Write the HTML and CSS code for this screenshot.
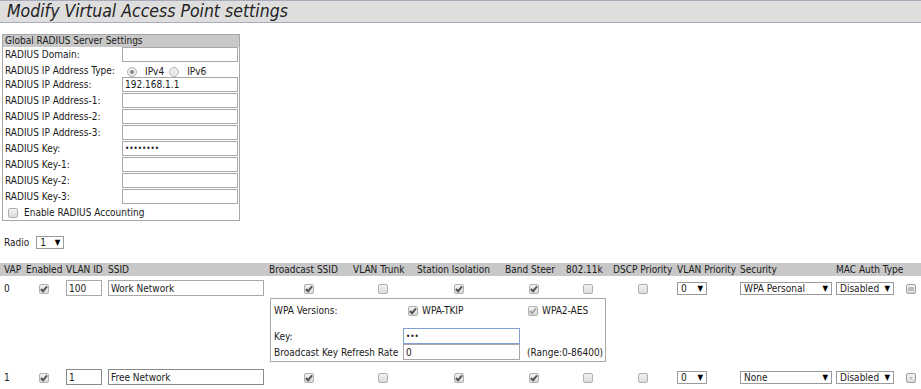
FILE: index.html
```html
<!DOCTYPE html>
<html lang="en">
<head>
    <meta charset="UTF-8">
    <meta name="viewport" content="width=device-width, initial-scale=1.0">
    <title>Modify Virtual Access Point settings</title>
    <link rel="stylesheet" href="styles.css">
</head>
<body>
    <div class="page-title">Modify Virtual Access Point settings</div>

    <div class="radius-box">
        <div class="box-head">Global RADIUS Server Settings</div>
        <div class="form-row"><label>RADIUS Domain:</label><input type="text"></div>
        <div class="form-row type-row">
            <label>RADIUS IP Address Type:</label>
            <span class="ip-opts"><span class="radio on"></span>IPv4<span class="radio"></span>IPv6</span>
        </div>
        <div class="form-row"><label>RADIUS IP Address:</label><input type="text" value="192.168.1.1"></div>
        <div class="form-row"><label>RADIUS IP Address-1:</label><input type="text"></div>
        <div class="form-row"><label>RADIUS IP Address-2:</label><input type="text"></div>
        <div class="form-row"><label>RADIUS IP Address-3:</label><input type="text"></div>
        <div class="form-row"><label>RADIUS Key:</label><input type="password" value="12345678"></div>
        <div class="form-row"><label>RADIUS Key-1:</label><input type="text"></div>
        <div class="form-row"><label>RADIUS Key-2:</label><input type="text"></div>
        <div class="form-row"><label>RADIUS Key-3:</label><input type="text"></div>
        <div class="acct-row"><span class="cb"></span>Enable RADIUS Accounting</div>
    </div>

    <div class="radio-pick">Radio <span class="sel sel-radio">1<b>▼</b></span></div>

    <table class="vap-table">
        <colgroup>
            <col class="c-vap"><col class="c-en"><col class="c-vlan"><col class="c-ssid">
            <col class="c-bcast"><col class="c-trunk"><col class="c-iso"><col class="c-steer">
            <col class="c-11k"><col class="c-dscp"><col class="c-vpri"><col class="c-sec">
            <col class="c-mac"><col class="c-btn">
        </colgroup>
        <thead>
            <tr>
                <th>VAP</th><th>Enabled</th><th>VLAN ID</th><th>SSID</th>
                <th>Broadcast SSID</th><th>VLAN Trunk</th><th>Station Isolation</th><th>Band Steer</th>
                <th>802.11k</th><th>DSCP Priority</th><th>VLAN Priority</th><th>Security</th>
                <th>MAC Auth Type</th><th></th>
            </tr>
        </thead>
        <tbody>
            <tr class="vap-row">
                <td>0</td>
                <td class="mid"><span class="cb on"></span></td>
                <td><input type="text" class="in-vlan" value="100"></td>
                <td><input type="text" class="in-ssid" value="Work Network"></td>
                <td class="mid"><span class="cb on"></span></td>
                <td class="mid"><span class="cb"></span></td>
                <td class="mid"><span class="cb on"></span></td>
                <td class="mid"><span class="cb on"></span></td>
                <td class="mid"><span class="cb"></span></td>
                <td class="mid"><span class="cb"></span></td>
                <td><span class="sel sel-pri">0<b>▼</b></span></td>
                <td><span class="sel sel-sec">WPA Personal<b>▼</b></span></td>
                <td><span class="sel sel-mac">Disabled<b>▼</b></span></td>
                <td class="mid"><span class="row-btn minus"></span></td>
            </tr>
            <tr class="sec-row">
                <td colspan="4"></td>
                <td colspan="5">
                    <div class="wpa-box">
                        <span class="wpa-top">WPA Versions:</span>
                        <span class="wpa-top"><span class="cb on"></span>WPA-TKIP</span>
                        <span class="wpa-top"><span class="cb on off"></span>WPA2-AES</span>
                        <span>Key:</span>
                        <input type="password" class="in-key focus" value="abc">
                        <span></span>
                        <span>Broadcast Key Refresh Rate</span>
                        <input type="text" class="in-key" value="0">
                        <span class="range">(Range:0-86400)</span>
                    </div>
                </td>
                <td colspan="5"></td>
            </tr>
            <tr class="vap-row last">
                <td>1</td>
                <td class="mid"><span class="cb on"></span></td>
                <td><input type="text" class="in-vlan dark" value="1"></td>
                <td><input type="text" class="in-ssid dark" value="Free Network"></td>
                <td class="mid"><span class="cb on"></span></td>
                <td class="mid"><span class="cb"></span></td>
                <td class="mid"><span class="cb on"></span></td>
                <td class="mid"><span class="cb on"></span></td>
                <td class="mid"><span class="cb"></span></td>
                <td class="mid"><span class="cb"></span></td>
                <td><span class="sel sel-pri">0<b>▼</b></span></td>
                <td><span class="sel sel-sec">None<b>▼</b></span></td>
                <td><span class="sel sel-mac">Disabled<b>▼</b></span></td>
                <td class="mid"><span class="row-btn dot"></span></td>
            </tr>
        </tbody>
    </table>
</body>
</html>
```

FILE: styles.css
```css
body {
    margin: 0;
    font-family: "DejaVu Sans Condensed", "DejaVu Sans", sans-serif;
    font-size: 10px;
    color: #1a1a1a;
    background: #fff;
}
input {
    font-family: inherit;
    font-size: 10px;
    color: #1a1a1a;
    box-sizing: border-box;
    height: 15px;
    margin: 0;
    padding: 0 2px;
    border: 1px solid #a9a9a9;
    background: #fff;
    outline: none;
}
input[type=password] {
    font-size: 8px;
    letter-spacing: 0;
}
.page-title {
    height: 21px;
    line-height: 21px;
    border-top: 1px solid #a7adbb;
    border-bottom: 1px solid #a7adbb;
    background: #dedede;
    padding-left: 7px;
    font-size: 17.5px;
    font-style: italic;
    color: #222;
}

/* global radius box */
.radius-box {
    width: 236px;
    margin: 11px 0 0 2px;
    border: 1px solid #a8a8a8;
}
.box-head {
    height: 12px;
    line-height: 12px;
    padding-left: 2px;
    background: #c8c8c8;
}
.form-row {
    display: grid;
    grid-template-columns: 117px 116px;
    align-items: start;
    height: 16px;
    padding-left: 2px;
}
.form-row label {
    line-height: 15px;
    white-space: nowrap;
}
.form-row input {
    width: 116px;
}
.type-row {
    height: 14px;
}
.ip-opts {
    display: flex;
    align-items: center;
    line-height: 15px;
    padding-top: 1px;
}
.radio {
    display: inline-block;
    box-sizing: border-box;
    width: 10px;
    height: 10px;
    border: 1px solid #b4b4b4;
    border-radius: 50%;
    background: #ececec;
    margin: 0 8px 0 5px;
    position: relative;
}
.radio.on::after {
    content: "";
    position: absolute;
    left: 2px;
    top: 2px;
    width: 4px;
    height: 4px;
    border-radius: 50%;
    background: #888;
}
.acct-row {
    display: flex;
    align-items: center;
    height: 15px;
    padding-left: 5px;
}
.acct-row .cb {
    margin-right: 6px;
}

/* checkbox look */
.cb {
    display: inline-block;
    position: relative;
    box-sizing: border-box;
    width: 10px;
    height: 10px;
    border: 1px solid #b0b0b0;
    border-radius: 2px;
    background: linear-gradient(#f2f2f2, #dcdcdc);
    vertical-align: middle;
}
.cb.on::after {
    content: "";
    position: absolute;
    left: 2px;
    top: 0px;
    width: 2px;
    height: 5px;
    border-right: 2px solid #555;
    border-bottom: 2px solid #555;
    transform: rotate(40deg);
}
.cb.off::after {
    border-color: #a8a8a8;
}

/* select look */
.sel {
    display: inline-flex;
    justify-content: space-between;
    align-items: center;
    box-sizing: border-box;
    height: 13px;
    padding: 0 3px 0 3px;
    border: 1px solid #9a9a9a;
    background: #fff;
    line-height: 11px;
    vertical-align: middle;
}
.sel b {
    font-size: 8px;
    font-weight: normal;
    color: #000;
}
.sel-radio { width: 28px; margin-left: 7px; }
.sel-pri { width: 30px; }
.sel-sec { width: 92px; }
.sel-mac { width: 58px; }

.radio-pick {
    display: flex;
    align-items: center;
    margin: 15px 0 0 4px;
    height: 13px;
}

/* vap table */
.vap-table {
    width: 100%;
    margin-top: 14px;
    table-layout: fixed;
    border-collapse: collapse;
}
.c-vap { width: 24px; }
.c-en { width: 40px; }
.c-vlan { width: 42px; }
.c-ssid { width: 161px; }
.c-bcast { width: 84px; }
.c-trunk { width: 64px; }
.c-iso { width: 88px; }
.c-steer { width: 61px; }
.c-11k { width: 47px; }
.c-dscp { width: 64px; }
.c-vpri { width: 63px; }
.c-sec { width: 96px; }
.c-mac { width: 66px; }
.vap-table th {
    height: 13px;
    padding: 0 2px;
    background: #c8c8c8;
    font-weight: normal;
    text-align: left;
    line-height: 13px;
    white-space: nowrap;
}
.vap-table td {
    padding: 0 2px;
    white-space: nowrap;
}
.vap-table th:first-child,
.vap-table td:first-child {
    padding-left: 4px;
}
.vap-row td {
    height: 16px;
    padding-top: 4px;
    padding-bottom: 1px;
    vertical-align: middle;
}
.vap-row.last td {
    padding-top: 7px;
}
.vap-table td.mid {
    text-align: center;
}
.in-vlan { width: 36px; height: 16px; }
.in-ssid { width: 156px; height: 16px; }
.dark { border-color: #8a8a8a; }

.row-btn {
    display: inline-block;
    position: relative;
    box-sizing: border-box;
    width: 10px;
    height: 10px;
    border: 1px solid #a0a0a0;
    border-radius: 2px;
    background: linear-gradient(#f4f4f4, #dadada);
    vertical-align: middle;
}
.row-btn.minus::after {
    content: "";
    position: absolute;
    left: 1px;
    top: 2px;
    width: 6px;
    height: 4px;
    border-radius: 1px;
    background: #bcbcbc;
}
.row-btn.dot::after {
    content: "";
    position: absolute;
    left: 3px;
    top: 3px;
    width: 2px;
    height: 2px;
    background: #bcbcbc;
}

/* wpa sub box */
.sec-row td {
    padding: 1px 2px 0;
}
.wpa-box {
    width: 336px;
    margin-left: 1px;
    box-sizing: border-box;
    border: 1px solid #a8a8a8;
    display: grid;
    grid-template-columns: 129px 120px auto;
    grid-template-rows: 29px 16px 16px;
    align-items: center;
    padding: 0 3px 1px;
}
.wpa-box .wpa-top {
    align-self: start;
    padding-top: 6px;
    display: flex;
    align-items: center;
}
.wpa-top .cb {
    margin: 0 4px 0 5px;
}
.in-key {
    width: 117px;
    height: 16px;
    margin-left: 0;
    align-self: start;
}
.in-key.focus {
    border-color: #7da2ce;
}
.range {
    padding-left: 4px;
}
```
